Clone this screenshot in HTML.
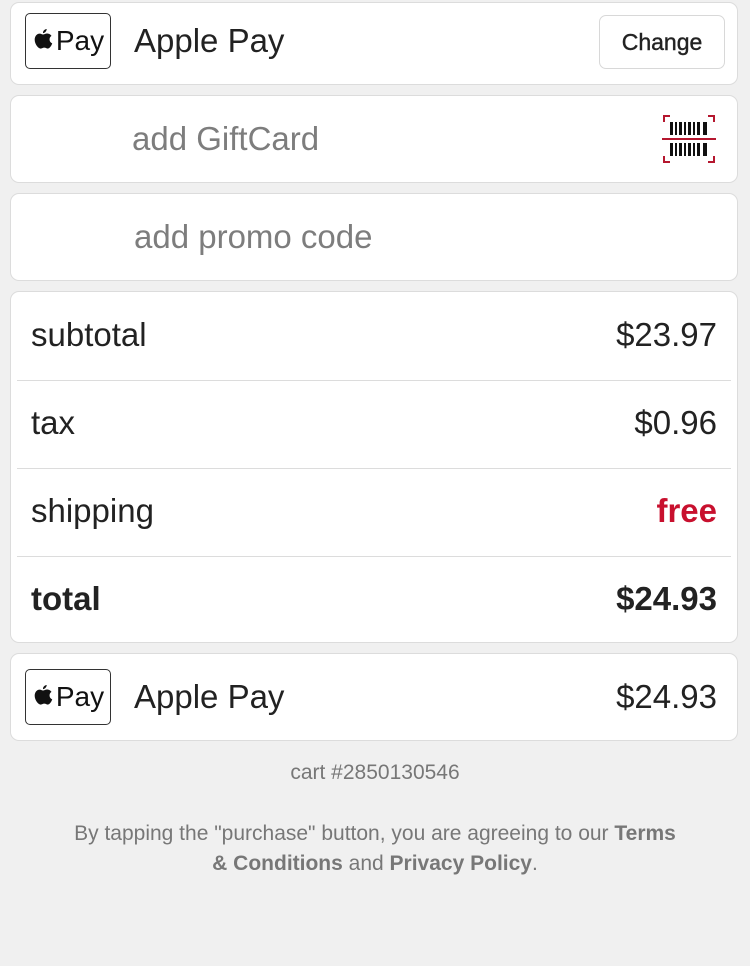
<!DOCTYPE html>
<html><head><meta charset="utf-8"><style>
body{margin:0;width:750px;height:966px;background:#f0f0f0;font-family:"Liberation Sans",sans-serif;position:relative;overflow:hidden}
.card{position:absolute;left:10px;width:728px;background:#fff;border:1px solid #dcdcdc;border-radius:9px;box-sizing:border-box}
.ap{position:absolute;left:14px;width:86px;height:56px;border:1px solid #333;border-radius:5px;box-sizing:border-box;font-size:28px;color:#111;display:flex;align-items:center;justify-content:center;gap:2px}
.t{position:absolute;font-size:33px;color:#222}
.row{position:absolute;left:6px;right:6px;height:88px;border-bottom:1px solid #dcdcdc}
.row span{position:absolute;top:24px;font-size:33px;color:#222}
.row .l{left:14px}.row .r{right:14px}
</style></head><body>
<div class="card" style="top:2px;height:83px">
 <div class="ap" style="top:10px"><svg width="22" height="24" viewBox="0 0 22 26"><path d="M15 0c0 2-1.6 4.2-4 4.5C10.8 2.3 12.6 0.3 15 0z M11 6c1.2 0 2.8-1.1 4.4-1.1 1 0 3.4.3 4.8 2.6-3.2 2-2.6 6.9.8 8.1-.7 2-2.6 5.6-4.8 5.6-1.6 0-2-1-3.8-1s-2.4 1-3.9 1C6 21.2 2 16.4 2 11.6 2 7.6 4.6 5 7.3 5 9 5 10 6 11 6z" fill="#111"/></svg>Pay</div>
 <div class="t" style="left:123px;top:19px">Apple Pay</div>
 <div style="position:absolute;right:12px;top:12px;width:126px;height:54px;border:1px solid #d8d8d8;border-radius:7px;box-sizing:border-box;font-size:23px;color:#222;display:flex;align-items:center;justify-content:center;-webkit-text-stroke:0.4px #222">Change</div>
</div>
<div class="card" style="top:95px;height:88px">
 <div class="t" style="left:121px;top:24px;color:#7d7d7d">add GiftCard</div>
 <svg style="position:absolute;left:651px;top:18px" width="54" height="50" viewBox="0 0 54 50">
  <path d="M2 8V2h6M46 2h6v6M2 42v6h6M46 48h6v-6" stroke="#b5172f" stroke-width="2" fill="none"/>
  <rect x="0" y="24" width="54" height="2" fill="#b5172f"/>
  <g fill="#111"><rect x="8" y="8" width="3" height="13"/><rect x="13" y="8" width="2" height="13"/><rect x="17" y="8" width="3" height="13"/><rect x="22" y="8" width="2" height="13"/><rect x="26" y="8" width="3" height="13"/><rect x="31" y="8" width="2" height="13"/><rect x="35" y="8" width="3" height="13"/><rect x="41" y="8" width="4" height="13"/>
  <rect x="8" y="29" width="3" height="13"/><rect x="13" y="29" width="2" height="13"/><rect x="17" y="29" width="3" height="13"/><rect x="22" y="29" width="2" height="13"/><rect x="26" y="29" width="3" height="13"/><rect x="31" y="29" width="2" height="13"/><rect x="35" y="29" width="3" height="13"/><rect x="41" y="29" width="4" height="13"/></g>
 </svg>
</div>
<div class="card" style="top:193px;height:88px">
 <div class="t" style="left:123px;top:24px;color:#7d7d7d">add promo code</div>
</div>
<div class="card" style="top:291px;height:352px">
 <div class="row" style="top:0"><span class="l">subtotal</span><span class="r">$23.97</span></div>
 <div class="row" style="top:88px"><span class="l">tax</span><span class="r">$0.96</span></div>
 <div class="row" style="top:176px"><span class="l">shipping</span><span class="r" style="color:#c8102e;font-weight:bold">free</span></div>
 <div class="row" style="top:264px;border:none"><span class="l" style="font-weight:bold">total</span><span class="r" style="font-weight:bold">$24.93</span></div>
</div>
<div class="card" style="top:653px;height:88px">
 <div class="ap" style="top:15px"><svg width="22" height="24" viewBox="0 0 22 26"><path d="M15 0c0 2-1.6 4.2-4 4.5C10.8 2.3 12.6 0.3 15 0z M11 6c1.2 0 2.8-1.1 4.4-1.1 1 0 3.4.3 4.8 2.6-3.2 2-2.6 6.9.8 8.1-.7 2-2.6 5.6-4.8 5.6-1.6 0-2-1-3.8-1s-2.4 1-3.9 1C6 21.2 2 16.4 2 11.6 2 7.6 4.6 5 7.3 5 9 5 10 6 11 6z" fill="#111"/></svg>Pay</div>
 <div class="t" style="left:123px;top:24px">Apple Pay</div>
 <div class="t" style="right:20px;top:24px">$24.93</div>
</div>
<div style="position:absolute;top:761px;width:750px;text-align:center;font-size:21px;color:#777">cart #2850130546</div>
<div style="position:absolute;top:819px;left:10px;width:730px;text-align:center;font-size:21px;line-height:30px;color:#777">By tapping the "purchase" button, you are agreeing to our <b>Terms</b><br><b>&amp; Conditions</b> and <b>Privacy Policy</b>.</div>
</body></html>
